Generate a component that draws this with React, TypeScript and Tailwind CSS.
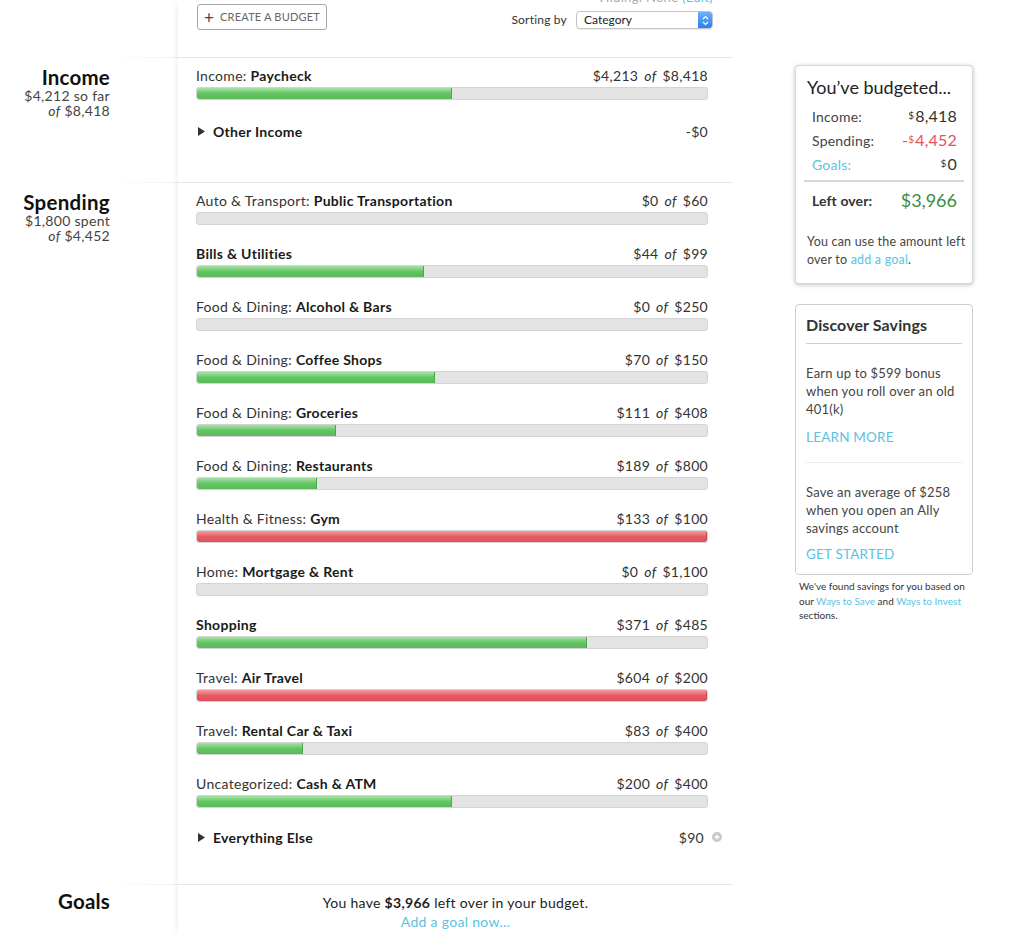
import React from "react";

type Row = { cat?: string; name: string; spent: number; budget: number; s: string; b: string };

const rows: Row[] = [
  { cat: "Auto & Transport", name: "Public Transportation", spent: 0, budget: 60, s: "$0", b: "$60" },
  { name: "Bills & Utilities", spent: 44, budget: 99, s: "$44", b: "$99" },
  { cat: "Food & Dining", name: "Alcohol & Bars", spent: 0, budget: 250, s: "$0", b: "$250" },
  { cat: "Food & Dining", name: "Coffee Shops", spent: 70, budget: 150, s: "$70", b: "$150" },
  { cat: "Food & Dining", name: "Groceries", spent: 111, budget: 408, s: "$111", b: "$408" },
  { cat: "Food & Dining", name: "Restaurants", spent: 189, budget: 800, s: "$189", b: "$800" },
  { cat: "Health & Fitness", name: "Gym", spent: 133, budget: 100, s: "$133", b: "$100" },
  { cat: "Home", name: "Mortgage & Rent", spent: 0, budget: 1100, s: "$0", b: "$1,100" },
  { name: "Shopping", spent: 371, budget: 485, s: "$371", b: "$485" },
  { cat: "Travel", name: "Air Travel", spent: 604, budget: 200, s: "$604", b: "$200" },
  { cat: "Travel", name: "Rental Car & Taxi", spent: 83, budget: 400, s: "$83", b: "$400" },
  { cat: "Uncategorized", name: "Cash & ATM", spent: 200, budget: 400, s: "$200", b: "$400" },
];

function Bar({ spent, budget }: { spent: number; budget: number }) {
  const over = spent > budget;
  const pct = Math.min(1, spent / budget) * 100;
  return (
    <div className="mt-[3px] h-[13px] w-[512px] rounded-[3px] bg-[#e3e3e3] border border-[#d4d4d4] overflow-hidden">
      {pct > 0 && (
        <div
          className={
            over
              ? "h-full rounded-[2px] bg-gradient-to-b from-[#f29ca1] via-[#e75a63] to-[#e1505a] border-r border-[#c94c54]"
              : "h-full rounded-l-[2px] bg-gradient-to-b from-[#a6e3a6] via-[#63c563] to-[#58bb58] border-r border-[#4aa84a]"
          }
          style={{ width: `${pct}%` }}
        />
      )}
    </div>
  );
}

function BudgetRow({ r }: { r: Row }) {
  return (
    <div className="h-[53px]">
      <div className="flex h-[18px] w-[512px] items-center justify-between text-[14px] tracking-[0.3px] text-[#333]">
        <div>
          {r.cat && <span>{r.cat}: </span>}
          <span className="font-bold text-[#1a1a1a]">{r.name}</span>
        </div>
        <div>
          {r.s}
          <i className="mx-[6px]">of</i>
          {r.b}
        </div>
      </div>
      <Bar spent={r.spent} budget={r.budget} />
    </div>
  );
}

function SectionLine() {
  return <div className="h-px w-full bg-[#e6e6e6]" />;
}

function LeftLine() {
  return <div className="h-px ml-[110px] bg-gradient-to-r from-transparent to-[#f0f0f0]" />;
}

function Triangle() {
  return (
    <svg width="8" height="9" viewBox="0 0 8 9" className="mr-[7px] ml-[2px]">
      <path d="M0 0 L7 4.5 L0 9 Z" fill="#333" />
    </svg>
  );
}

function Dollar() {
  return <span className="text-[10px] relative top-[-3px] mr-[1px]">$</span>;
}

export default function App() {
  return (
    <div
      className="flex w-[1024px] h-[936px] overflow-hidden bg-white text-[#333]"
      style={{ fontFamily: "Lato, 'Open Sans', sans-serif" }}
    >
      {/* Left labels column */}
      <div className="w-[178px] shrink-0 flex flex-col">
        <div className="h-[57px]" />
        <LeftLine />
        <div className="h-[124px] pt-[7px] pr-[68px] text-right">
          <div className="text-[20.5px] leading-[24px] font-bold text-[#111] tracking-[0.2px]">Income</div>
          <div className="text-[14px] leading-[15px] tracking-[0.3px] text-[#444] mt-[-1px]">$4,212 so far</div>
          <div className="text-[14px] leading-[15px] tracking-[0.3px] text-[#444]">
            <i>of</i> $8,418
          </div>
        </div>
        <LeftLine />
        <div className="h-[701px] pt-[7px] pr-[68px] text-right">
          <div className="text-[20.5px] leading-[24px] font-bold text-[#111] tracking-[0.3px]">Spending</div>
          <div className="text-[14px] leading-[15px] tracking-[0.3px] text-[#444] mt-[-1px]">$1,800 spent</div>
          <div className="text-[14px] leading-[15px] tracking-[0.3px] text-[#444]">
            <i>of</i> $4,452
          </div>
        </div>
        <LeftLine />
        <div className="pt-[4px] pr-[68px] text-right">
          <div className="text-[20.5px] leading-[24px] font-bold text-[#111] tracking-[0.2px]">Goals</div>
        </div>
      </div>

      {/* Middle panel */}
      <div className="w-[555px] shrink-0 flex flex-col shadow-[-5px_0_7px_-5px_rgba(0,0,0,0.10)]">
        <div className="h-[57px] flex justify-between pl-[19px] pr-[20px]">
          <div className="pt-[4px]">
            <button className="flex items-center h-[26px] w-[130px] border border-[#a8a8a8] rounded-[3px] px-[6px] text-[11px] text-[#666] tracking-[0.2px] bg-white">
              <span className="text-[17px] leading-none mr-[6px] text-[#444]">+</span>
              CREATE A BUDGET
            </button>
          </div>
          <div className="flex flex-col items-end">
            <div className="text-[13px] leading-[12px] mt-[-9px] text-[#aaa] tracking-[0.3px]">
              Hiding: None <span className="text-[#5bc3e0]">(Edit)</span>
            </div>
            <div className="flex items-center mt-[8px]">
              <span className="text-[12px] tracking-[0.2px] text-[#333] mr-[9px]">Sorting by</span>
              <div className="flex items-center h-[18px] w-[137px] border border-[#c4c4c4] rounded-[4px] bg-white overflow-hidden shadow-[0_1px_1px_rgba(0,0,0,0.08)]">
                <span className="flex-1 pl-[7px] text-[12px] text-[#222]">Category</span>
                <div className="w-[14px] h-full bg-gradient-to-b from-[#6cb0f7] to-[#2c7ef0] flex items-center justify-center">
                  <svg width="7" height="11" viewBox="0 0 7 11">
                    <path d="M1 4 L3.5 1.5 L6 4 M1 7 L3.5 9.5 L6 7" stroke="white" strokeWidth="1.2" fill="none" />
                  </svg>
                </div>
              </div>
            </div>
          </div>
        </div>
        <SectionLine />
        <div className="h-[124px] pl-[18px] pt-[8px]">
          <BudgetRow r={{ cat: "Income", name: "Paycheck", spent: 4213, budget: 8418, s: "$4,213", b: "$8,418" }} />
          <div className="mt-[3px] flex h-[18px] w-[512px] items-center justify-between text-[14px] tracking-[0.3px]">
            <div className="flex items-center font-bold text-[#1a1a1a]">
              <Triangle />
              Other Income
            </div>
            <div>-$0</div>
          </div>
        </div>
        <SectionLine />
        <div className="h-[701px] pl-[18px] pt-[8px]">
          {rows.map((r, i) => (
            <BudgetRow key={i} r={r} />
          ))}
          <div className="mt-[1px] flex h-[18px] w-[526px] items-center text-[14px] tracking-[0.3px]">
            <div className="flex items-center font-bold text-[#1a1a1a] flex-1">
              <Triangle />
              Everything Else
            </div>
            <div>$90</div>
            <svg width="10" height="10" viewBox="0 0 10 10" className="ml-[8px]">
              <circle cx="5" cy="5" r="5" fill="#c8c8c8" />
              <path d="M5 2.5 V7.5 M2.5 5 H7.5" stroke="white" strokeWidth="1.4" />
            </svg>
          </div>
        </div>
        <SectionLine />
        <div className="pt-[8px] text-center text-[14px] tracking-[0.3px] leading-[19px]">
          <div className="text-[#222]">
            You have <b>$3,966</b> left over in your budget.
          </div>
          <div className="text-[#5bc3e0]">Add a goal now...</div>
        </div>
      </div>

      {/* Sidebar */}
      <div className="pl-[62px] pt-[65px] w-[240px] shrink-0">
        <div className="w-[178px] rounded-[4px] border border-[#d8d8d8] shadow-[0_1px_4px_rgba(0,0,0,0.25)] pl-[11px] pr-[11px] pt-[10px] pb-[14px] bg-white">
          <div className="text-[18px] leading-[22px] text-[#222] whitespace-nowrap">You’ve budgeted...</div>
          <div className="mt-[6px] pl-[5px] pr-[4px] text-[14px] tracking-[0.2px]">
            <div className="flex justify-between items-center h-[24px]">
              <span className="text-[#444]">Income:</span>
              <span className="text-[16px] text-[#333]">
                <Dollar />8,418
              </span>
            </div>
            <div className="flex justify-between items-center h-[24px]">
              <span className="text-[#444]">Spending:</span>
              <span className="text-[16px] text-[#e8505b]">
                -<Dollar />4,452
              </span>
            </div>
            <div className="flex justify-between items-center h-[24px]">
              <span className="text-[#5bc3e0]">Goals:</span>
              <span className="text-[16px] text-[#333]">
                <Dollar />0
              </span>
            </div>
          </div>
          <div className="h-[2px] bg-[#d6d6d6] mt-[4px] -mx-[3px]" />
          <div className="flex justify-between items-center h-[36px] pl-[5px] pr-[4px]">
            <span className="text-[14px] tracking-[0.1px] font-bold text-[#333]">Left over:</span>
            <span className="text-[18px] text-[#3c8c3c]">$3,966</span>
          </div>
          <div className="mt-[15px] text-[12.5px] tracking-[0.2px] leading-[18px] text-[#444] mr-[-9px]">
            You can use the amount left over to <span className="text-[#5bc3e0]">add a goal</span>.
          </div>
        </div>

        <div className="mt-[20px] w-[178px] rounded-[4px] border border-[#cfcfcf] px-[10px] pt-[10px] pb-[11px] bg-white">
          <div className="text-[16px] leading-[20px] font-bold text-[#333] tracking-[0.1px]">Discover Savings</div>
          <div className="h-px bg-[#cfcfcf] mt-[8px]" />
          <div className="mt-[20px] text-[13px] tracking-[0.2px] leading-[18px] text-[#444]">
            Earn up to $599 bonus when you roll over an old 401(k)
          </div>
          <div className="mt-[10px] text-[13.5px] tracking-[0.2px] leading-[18px] text-[#5bc3e0]">LEARN MORE</div>
          <div className="h-px bg-[#ececec] mt-[16px]" />
          <div className="mt-[20px] text-[13px] tracking-[0.2px] leading-[18px] text-[#444]">
            Save an average of $258 when you open an Ally savings account
          </div>
          <div className="mt-[8px] text-[13.5px] tracking-[0.2px] leading-[18px] text-[#5bc3e0]">GET STARTED</div>
        </div>
        <div className="mt-[4px] pl-[4px] w-[182px] text-[10px] leading-[14.5px] text-[#333]">
          We've found savings for you based on our <span className="text-[#5bc3e0]">Ways to Save</span> and{" "}
          <span className="text-[#5bc3e0]">Ways to Invest</span> sections.
        </div>
      </div>
    </div>
  );
}
